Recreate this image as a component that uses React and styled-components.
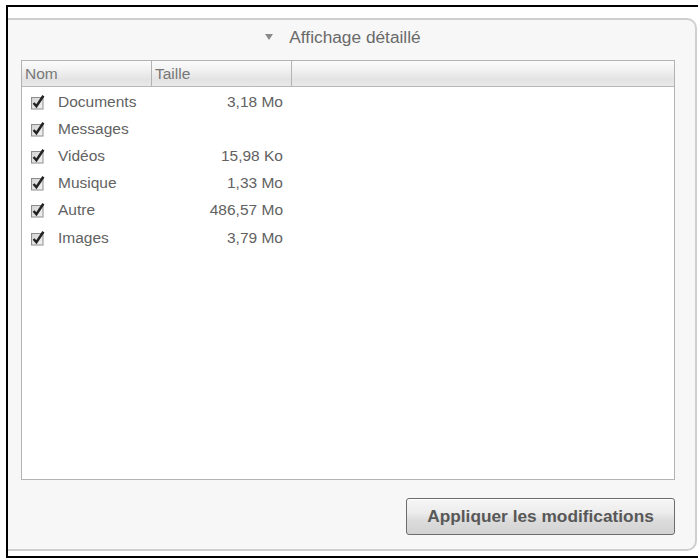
import React from "react";
import styled, { createGlobalStyle } from "styled-components";

const Global = createGlobalStyle`
  html, body { margin: 0; padding: 0; background: #ffffff; }
  body { font-family: "Liberation Sans", Arial, sans-serif; }
  #root { padding-top: 5px; }
`;

const Frame = styled.div`
  margin-left: 6px;
  width: 692px;
  box-sizing: border-box;
  border-top: 2px solid #000;
  border-left: 2px solid #000;
  border-bottom: 2px solid #000;
  padding: 11px 1px 5px 0;
`;

const Panel = styled.div`
  box-sizing: border-box;
  height: 533px;
  background: #f7f7f7;
  border: 2px solid #cfcfcf;
  border-left: none;
  border-radius: 0 10px 10px 0;
  display: flex;
  flex-direction: column;
  padding: 0 20px 14px 13px;
`;

const Title = styled.div`
  height: 40px;
  box-sizing: border-box;
  padding: 0 10px 6px 0;
  display: flex;
  align-items: center;
  justify-content: center;
  gap: 16px;
  color: #6a6a6a;
  font-size: 17.3px;
`;

const Table = styled.div`
  flex: 1;
  background: #fff;
  border: 1px solid #b3b3b3;
  display: flex;
  flex-direction: column;
`;

const HeaderRow = styled.div`
  height: 25px;
  display: grid;
  grid-template-columns: 130px 140px 1fr;
  background: linear-gradient(#fbfbfb, #f2f2f2 35%, #e3e3e3 75%, #e9e9e9);
  border-bottom: 1px solid #b8b8b8;
`;

const HeaderCell = styled.div`
  display: flex;
  align-items: center;
  padding-left: ${(p) => p.$pad}px;
  color: #777;
  font-size: 15.5px;
  border-right: ${(p) => (p.$last ? "none" : "1px solid #b3b3b3")};
`;

const Body = styled.div`
  padding-top: 1px;
  display: flex;
  flex-direction: column;
`;

const Row = styled.div`
  height: 27.2px;
  display: grid;
  grid-template-columns: 130px 140px 1fr;
  align-items: center;
  color: #626262;
  font-size: 15.5px;
`;

const NameCell = styled.div`
  display: flex;
  align-items: center;
  padding-left: 9px;
  gap: 11px;
`;

const SizeCell = styled.div`
  text-align: right;
  padding-right: 9px;
`;

const Footer = styled.div`
  display: flex;
  justify-content: flex-end;
  padding-top: 18px;
`;

const Button = styled.button`
  width: 269px;
  height: 37px;
  box-sizing: border-box;
  border: 1px solid #6c6c6c;
  border-radius: 3px;
  background: linear-gradient(#f6f6f6, #ececec 40%, #dcdcdc 60%, #d2d2d2);
  box-shadow: inset 0 1px 0 #ffffff;
  font-family: "Liberation Sans", Arial, sans-serif;
  font-weight: bold;
  font-size: 17.3px;
  color: #585858;
  padding: 0;
`;

const Check = () => (
  <svg width="16" height="16" viewBox="0 0 16 16">
    <defs>
      <linearGradient id="cb" x1="0" y1="0" x2="1" y2="1">
        <stop offset="0" stopColor="#d2d2d2" />
        <stop offset="1" stopColor="#f4f4f4" />
      </linearGradient>
    </defs>
    <rect x="0.5" y="3.5" width="11.5" height="11.5" fill="url(#cb)" stroke="#8c8c8c" />
    <path d="M2.6 9 L5.4 12.2 L12.4 1.8" fill="none" stroke="#222" strokeWidth="2.5" strokeLinejoin="miter" />
  </svg>
);

const Triangle = () => (
  <svg width="8" height="6" viewBox="0 0 8 6">
    <path d="M0 0 L8 0 L4 6 Z" fill="#8a8a8a" />
  </svg>
);

const items = [
  ["Documents", "3,18 Mo"],
  ["Messages", ""],
  ["Vidéos", "15,98 Ko"],
  ["Musique", "1,33 Mo"],
  ["Autre", "486,57 Mo"],
  ["Images", "3,79 Mo"],
];

export default function App() {
  return (
    <>
      <Global />
      <Frame>
        <Panel>
          <Title>
            <Triangle />
            <span>Affichage détaillé</span>
          </Title>
          <Table>
            <HeaderRow>
              <HeaderCell $pad={3}>Nom</HeaderCell>
              <HeaderCell $pad={3}>Taille</HeaderCell>
              <HeaderCell $last $pad={3} />
            </HeaderRow>
            <Body>
              {items.map(([name, size]) => (
                <Row key={name}>
                  <NameCell>
                    <Check />
                    <span>{name}</span>
                  </NameCell>
                  <SizeCell>{size}</SizeCell>
                  <div />
                </Row>
              ))}
            </Body>
          </Table>
          <Footer>
            <Button>Appliquer les modifications</Button>
          </Footer>
        </Panel>
      </Frame>
    </>
  );
}
